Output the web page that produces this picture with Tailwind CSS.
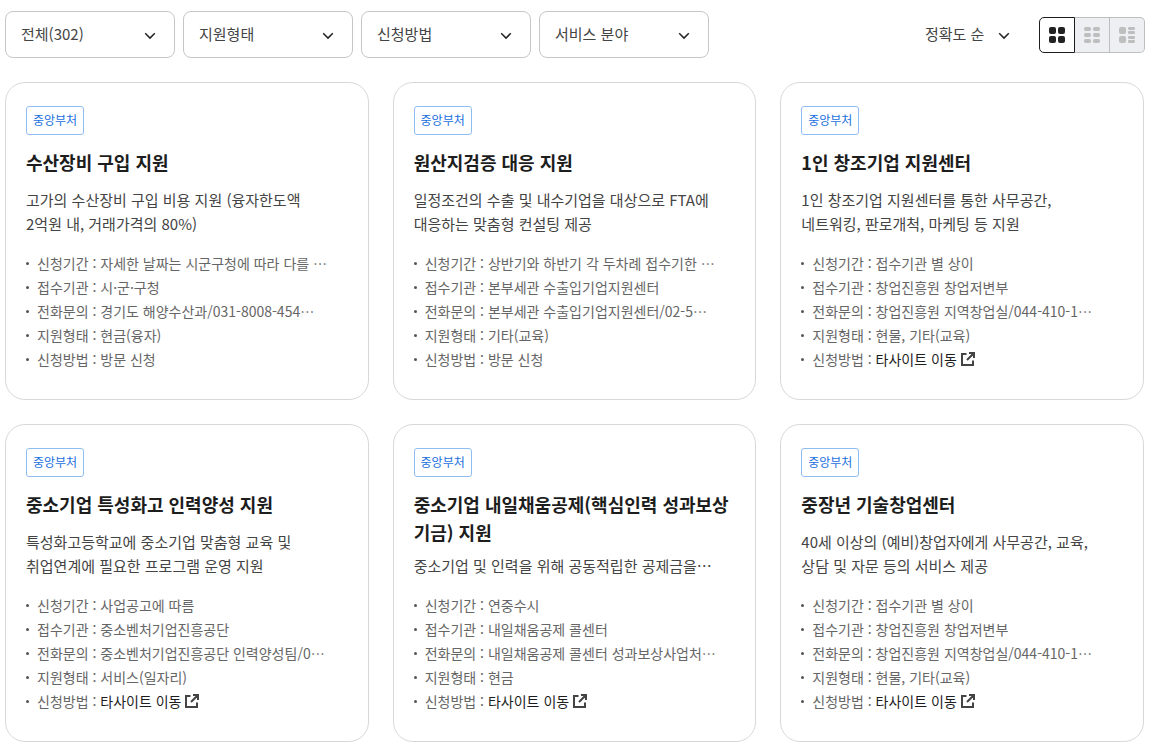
<!DOCTYPE html>
<html lang="ko">
<head>
    <meta charset="UTF-8">
    <meta name="viewport" content="width=device-width, initial-scale=1.0">
    <title>지원사업 목록</title>
    <script src="https://cdn.jsdelivr.net/npm/@tailwindcss/browser@4"></script>
</head>
<body class="bg-white pl-[5px] pr-[13px] pt-[11px] pb-2 font-['Noto_Sans_CJK_KR',sans-serif] text-[#444]">
    <!-- Filters -->
    <div class="flex items-center justify-between">
        <div id="filters" class="flex gap-2"></div>
        <div class="flex items-center gap-[26px]">
            <div class="relative">
                <select aria-label="정렬" class="appearance-none bg-transparent w-[88px] h-9 pb-0.5 text-[15px] leading-6 cursor-pointer">
                    <option>정확도 순</option>
                </select>
                <svg class="absolute right-[3px] top-3.5 pointer-events-none" width="12" height="10" viewBox="0 0 12 10" fill="none" stroke="#222" stroke-width="1.5"><path d="M1.2 2.3 6 7.1l4.8-4.8"/></svg>
            </div>
            <div class="flex">
                <button type="button" aria-label="카드형 보기" class="flex items-center justify-center w-9 h-9 border border-[#1d1d1d] rounded-l-[5px] bg-white">
                    <svg width="16" height="16" viewBox="0 0 16 16" fill="#222">
                        <rect x="0" y="0" width="7" height="7" rx="2"/><rect x="9" y="0" width="7" height="7" rx="2"/>
                        <rect x="0" y="9" width="7" height="7" rx="2"/><rect x="9" y="9" width="7" height="7" rx="2"/>
                    </svg>
                </button>
                <button type="button" aria-label="2단 보기" class="flex items-center justify-center w-[35px] h-9 border-y border-r border-[#bebebe] bg-[#eeeff3]">
                    <svg width="16" height="16" viewBox="0 0 16 16" fill="#bebebe">
                        <rect x="0" y="0" width="7" height="4" rx="1.7"/><rect x="9" y="0" width="7" height="4" rx="1.7"/>
                        <rect x="0" y="6" width="7" height="4" rx="1.7"/><rect x="9" y="6" width="7" height="4" rx="1.7"/>
                        <rect x="0" y="12" width="7" height="4" rx="1.7"/><rect x="9" y="12" width="7" height="4" rx="1.7"/>
                    </svg>
                </button>
                <button type="button" aria-label="목록형 보기" class="flex items-center justify-center w-[35px] h-9 border-y border-r border-[#bebebe] rounded-r-[5px] bg-[#eeeff3]">
                    <svg width="16" height="16" viewBox="0 0 16 16" fill="#bebebe">
                        <rect x="0" y="0" width="7" height="7" rx="2"/><rect x="0" y="9" width="7" height="7" rx="2"/>
                        <rect x="9" y="0" width="7" height="3" rx="1.3"/><rect x="9" y="4" width="7" height="3" rx="1.3"/>
                        <rect x="9" y="9" width="7" height="3" rx="1.3"/><rect x="9" y="13" width="7" height="3" rx="1.3"/>
                    </svg>
                </button>
            </div>
        </div>
    </div>

    <!-- Cards -->
    <div id="cards" class="grid grid-cols-3 gap-6 mt-6 mr-px"></div>

    <script>
        const filters = ['전체(302)', '지원형태', '신청방법', '서비스 분야'];
        const labels = ['신청기간', '접수기관', '전화문의', '지원형태', '신청방법'];
        const LINK = '타사이트 이동';

        const items = [
            {
                title: '수산장비 구입 지원',
                desc: '고가의 수산장비 구입 비용 지원 (융자한도액<br>2억원 내, 거래가격의 80%)',
                info: ['자세한 날짜는 시군구청에 따라 다를 ⋯', '시·군·구청', '경기도 해양수산과/031-8008-454⋯', '현금(융자)', '방문 신청']
            },
            {
                title: '원산지검증 대응 지원',
                desc: '일정조건의 수출 및 내수기업을 대상으로 FTA에<br>대응하는 맞춤형 컨설팅 제공',
                info: ['상반기와 하반기 각 두차례 접수기한 ⋯', '본부세관 수출입기업지원센터', '본부세관 수출입기업지원센터/02-5⋯', '기타(교육)', '방문 신청']
            },
            {
                title: '1인 창조기업 지원센터',
                desc: '1인 창조기업 지원센터를 통한 사무공간,<br>네트워킹, 판로개척, 마케팅 등 지원',
                info: ['접수기관 별 상이', '창업진흥원 창업저변부', '창업진흥원 지역창업실/044-410-1⋯', '현물, 기타(교육)', LINK]
            },
            {
                title: '중소기업 특성화고 인력양성 지원',
                desc: '특성화고등학교에 중소기업 맞춤형 교육 및<br>취업연계에 필요한 프로그램 운영 지원',
                info: ['사업공고에 따름', '중소벤처기업진흥공단', '중소벤처기업진흥공단 인력양성팀/0⋯', '서비스(일자리)', LINK]
            },
            {
                title: '중소기업 내일채움공제(핵심인력 성과보상<br>기금) 지원',
                desc: '중소기업 및 인력을 위해 공동적립한 공제금을⋯',
                info: ['연중수시', '내일채움공제 콜센터', '내일채움공제 콜센터 성과보상사업처⋯', '현금', LINK]
            },
            {
                title: '중장년 기술창업센터',
                desc: '40세 이상의 (예비)창업자에게 사무공간, 교육,<br>상담 및 자문 등의 서비스 제공',
                info: ['접수기관 별 상이', '창업진흥원 창업저변부', '창업진흥원 지역창업실/044-410-1⋯', '현물, 기타(교육)', LINK]
            }
        ];

        function renderValue(value) {
            if (value !== LINK) return value;
            return `<a href="#" class="inline-flex items-center gap-1 text-[#1d1d1d]">${value}<svg width="14" height="14" viewBox="0 0 14 14" fill="none" stroke="#444" stroke-width="2"><path d="M5.5 2H1v11h11V8.5M8 1h5v5M13 1 6 8"/></svg></a>`;
        }

        document.getElementById('filters').innerHTML = filters.map(name => `
            <div class="relative">
                <select aria-label="${name}" class="appearance-none block w-[170px] h-[47px] pl-[15px] pr-10 pb-0.5 border border-[#c6c6c6] rounded-lg bg-white text-[15px] leading-6 cursor-pointer">
                    <option>${name}</option>
                </select>
                <svg class="absolute right-[19px] top-5 pointer-events-none" width="12" height="10" viewBox="0 0 12 10" fill="none" stroke="#222" stroke-width="1.5"><path d="M1.2 2.3 6 7.1l4.8-4.8"/></svg>
            </div>`).join('');

        document.getElementById('cards').innerHTML = items.map(item => `
            <article class="border border-[#d8d8d8] rounded-[20px] px-5 pt-[23px] pb-7">
                <span class="flex items-center justify-center w-[58px] h-[29px] pb-0.5 border border-[#8fbdf2] rounded-[3px] text-xs text-[#1a6fe0]">중앙부처</span>
                <div class="flex flex-col justify-between min-h-[88px] mt-[13px]">
                    <h3 class="text-lg leading-7 font-bold text-[#1d1d1d] whitespace-nowrap"><a href="#">${item.title}</a></h3>
                    <p class="text-[15px] leading-6 whitespace-nowrap">${item.desc}</p>
                </div>
                <ul class="mt-[15px] text-sm leading-6 text-[#666]">
                    ${item.info.map((value, i) => `
                    <li class="flex items-center gap-2 whitespace-nowrap">
                        <span class="size-[3px] rounded-full bg-[#555]"></span>
                        <span>${labels[i]} : ${renderValue(value)}</span>
                    </li>`).join('')}
                </ul>
            </article>`).join('');
    </script>
</body>
</html>
